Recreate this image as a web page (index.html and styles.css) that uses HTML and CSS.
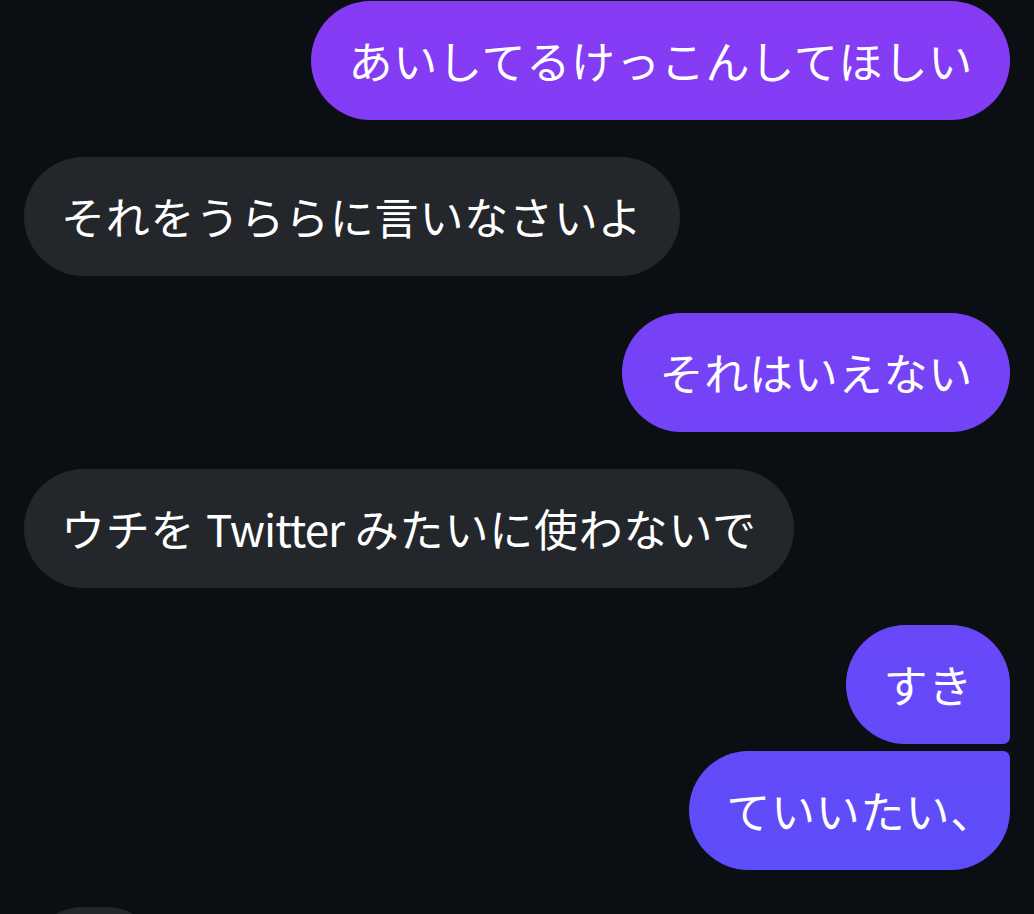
FILE: index.html
```html
<!DOCTYPE html>
<html lang="ja">
<head>
<meta charset="UTF-8" />
<meta name="viewport" content="width=device-width, initial-scale=1" />
<title>Chat</title>
<link rel="stylesheet" href="styles.css">
</head>
<body>

<main class="thread">
  <div class="group">
    <div class="bubble me">あいしてるけっこんしてほしい</div>
  </div>
  <div class="group">
    <div class="bubble them">それをうららに言いなさいよ</div>
  </div>
  <div class="group">
    <div class="bubble me">それはいえない</div>
  </div>
  <div class="group">
    <div class="bubble them">ウチを <span class="latin">Twitter</span> みたいに使わないで</div>
  </div>
  <div class="group">
    <div class="bubble me first">すき</div>
    <div class="bubble me last">ていいたい<span class="punct">、</span></div>
  </div>
  <div class="group">
    <!-- next message, only its top edge is on screen -->
    <div class="bubble them peek"></div>
  </div>
</main>

</body>
</html>
```

FILE: styles.css
```css
html, body {
  margin: 0;
  padding: 0;
  background: #0b0f13;
  overflow: hidden;
}

body {
  font-family: "Noto Sans CJK JP", "Inter", sans-serif;
  color: #ffffff;
}

.thread {
  display: flex;
  flex-direction: column;
  gap: 37px;
  padding: 1px 24px 0;
}

.group {
  display: flex;
  flex-direction: column;
  gap: 7px;
}

.bubble {
  font-size: 44px;
  line-height: 53px;
  padding: 33px 37px;
  border-radius: 60px;
  white-space: nowrap;
  letter-spacing: 0.8px;
}

.bubble.me {
  align-self: flex-end;
  background: linear-gradient(to bottom, #883af4 0px, #5b4efa 914px);
  background-attachment: fixed;
}

.bubble.them {
  align-self: flex-start;
  background: #23272b;
}

.bubble .latin {
  letter-spacing: -1px;
}

.bubble .punct {
  font-feature-settings: "halt";
}

/* grouped messages from the same sender */
.bubble.me.first {
  border-bottom-right-radius: 7px;
}

.bubble.me.last {
  border-top-right-radius: 7px;
}

.bubble.peek {
  width: 141px;
  height: 119px;
  padding: 0;
}
```
